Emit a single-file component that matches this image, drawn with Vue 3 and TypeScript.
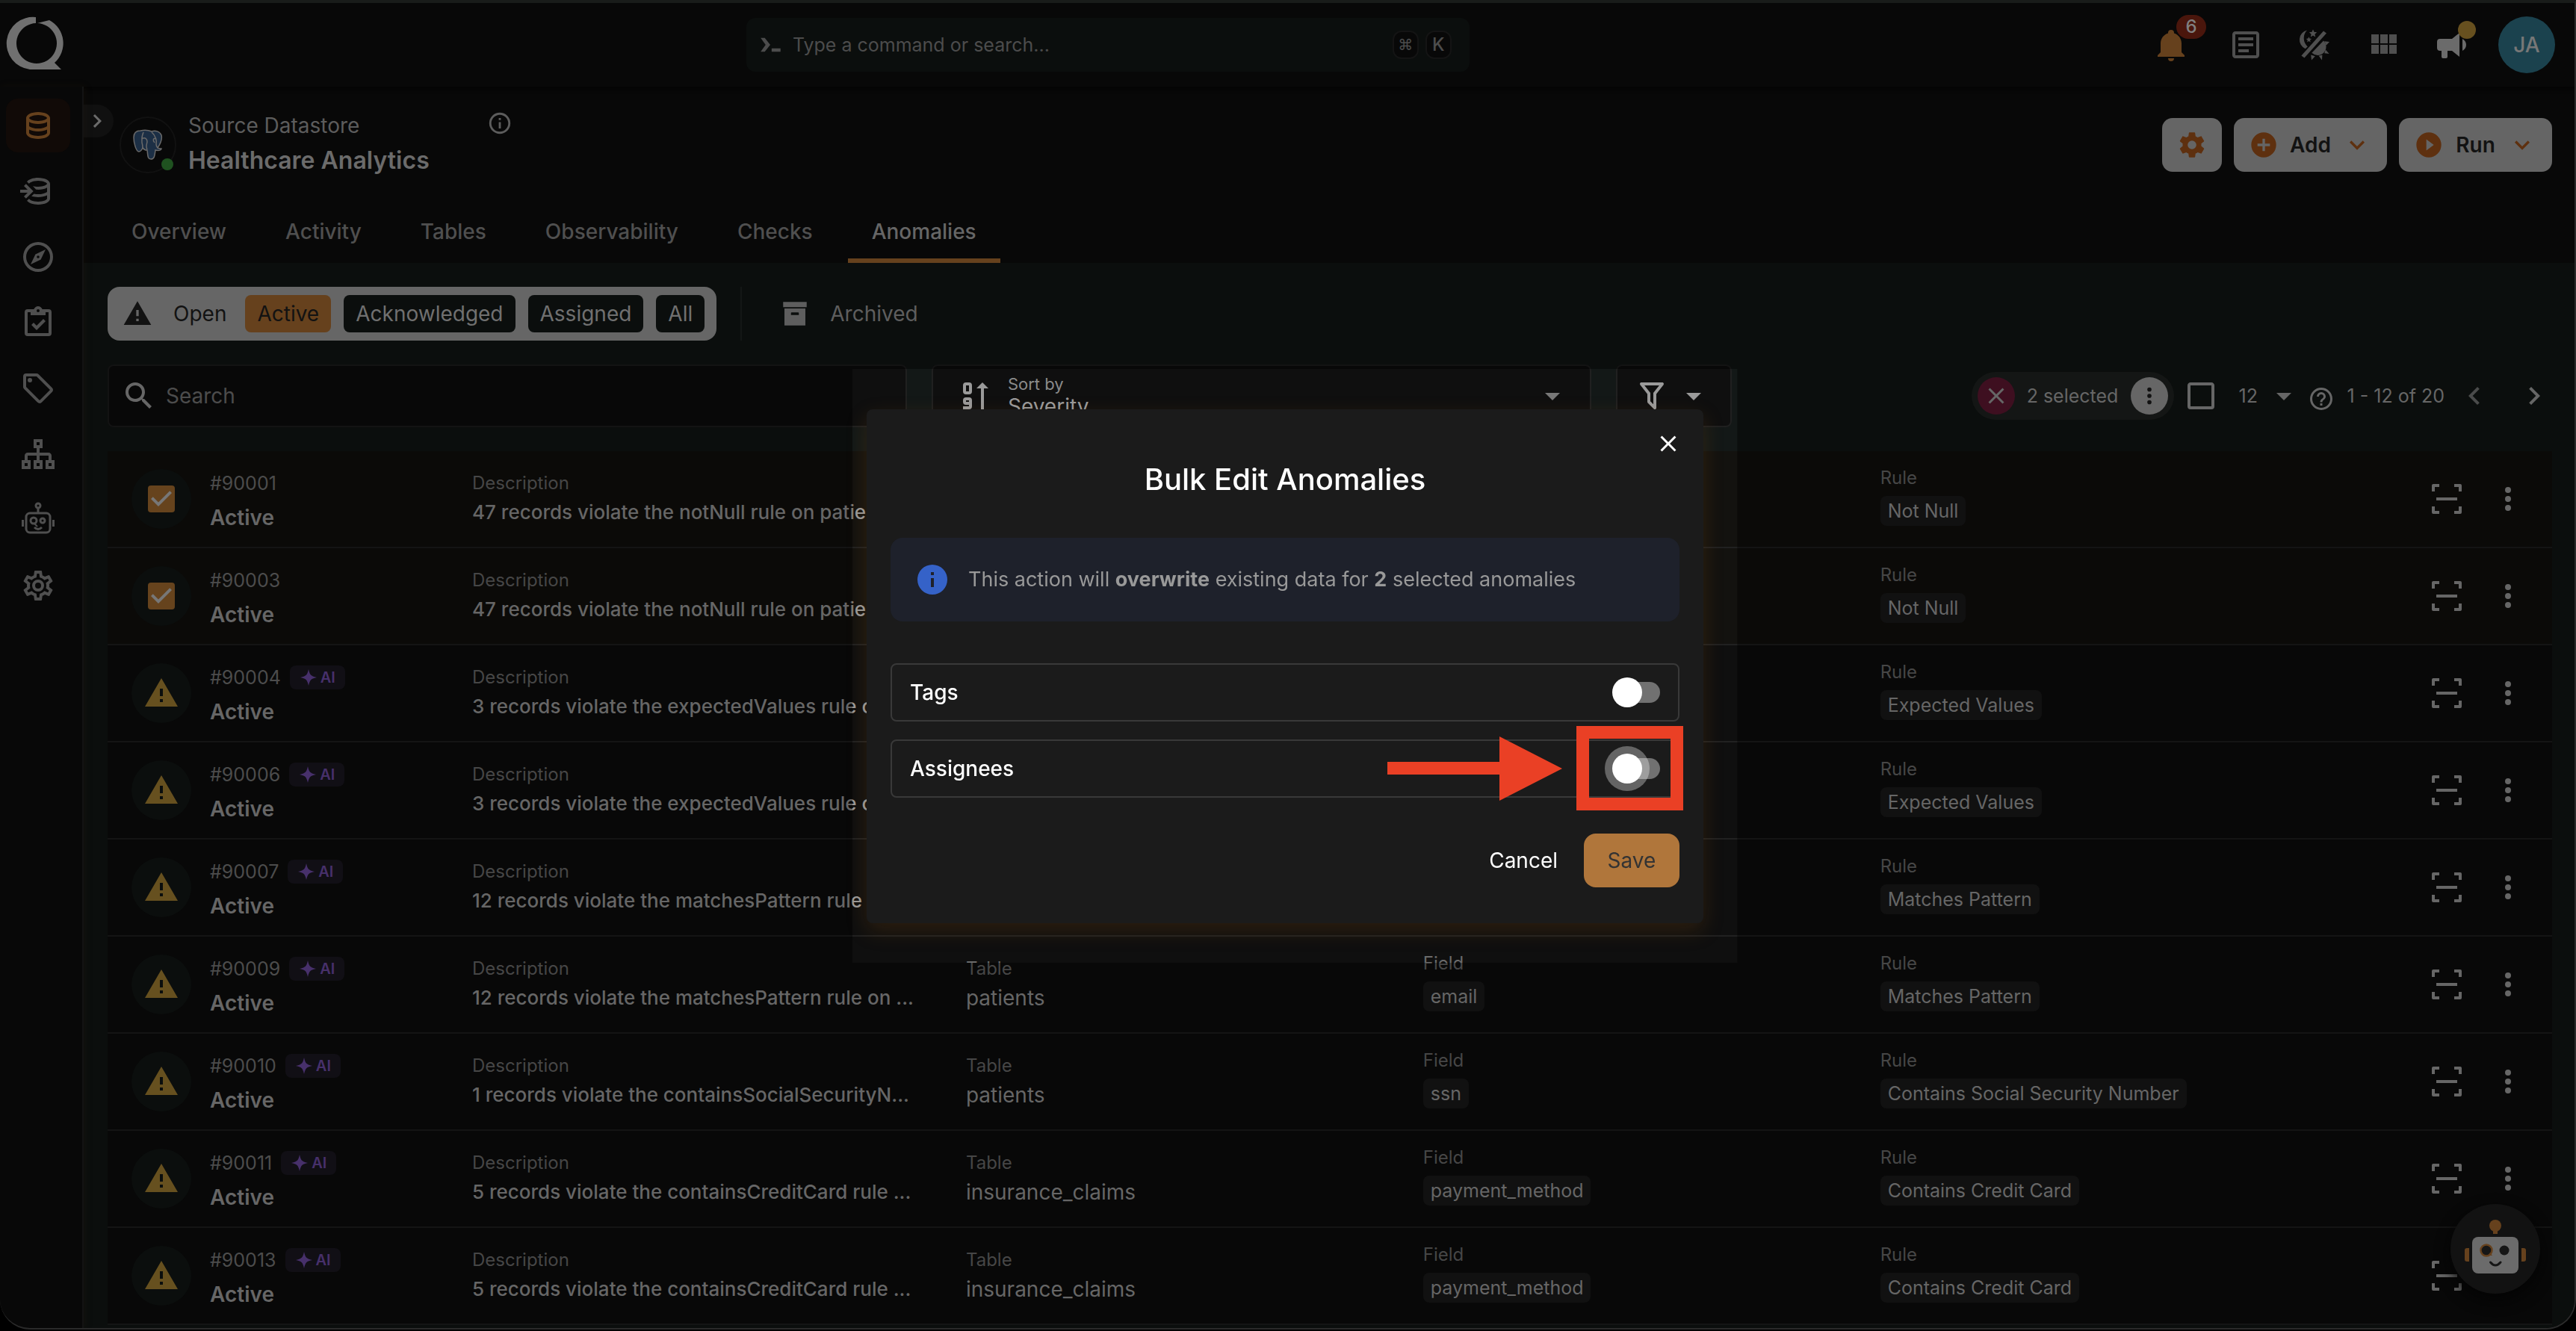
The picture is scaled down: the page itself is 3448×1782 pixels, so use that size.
<script setup lang="ts">
import { h, ref } from 'vue'

const paths: Record<string, string> = {
  database: 'M12 3C7.58 3 4 4.79 4 7V17C4 19.21 7.59 21 12 21S20 19.21 20 17V7C20 4.79 16.42 3 12 3M18 17C18 17.5 15.87 19 12 19S6 17.5 6 17V14.77C7.61 15.55 9.72 16 12 16S16.39 15.55 18 14.77V17M18 12.45C16.7 13.4 14.42 14 12 14C9.58 14 7.3 13.4 6 12.45V9.64C7.47 10.47 9.61 11 12 11C14.39 11 16.53 10.47 18 9.64V12.45M12 9C8.13 9 6 7.5 6 7S8.13 5 12 5C15.87 5 18 6.5 18 7S15.87 9 12 9Z',
  databaseImport: 'M8.84 12L3.92 16.92L2.5 15.5L5 13H0V11H5L2.5 8.5L3.92 7.08L8.84 12M12 3C8.59 3 5.69 4.07 4.54 5.57L6.2 7.22C6.07 7.1 6 7.02 6 7C6 6.5 8.13 5 12 5S18 6.5 18 7S15.87 9 12 9C10.6 9 9.4 8.8 8.46 8.5L10.6 10.92C11.05 10.97 11.52 11 12 11C14.39 11 16.53 10.47 18 9.64V12.45C16.7 13.4 14.42 14 12 14C11.04 14 10.1 13.9 9.24 13.73L7.55 15.42C8.9 15.8 10.4 16 12 16C14.28 16 16.39 15.55 18 14.77V17C18 17.5 15.87 19 12 19S6 17.5 6 17V16.96L4.54 18.43C5.69 19.93 8.59 21 12 21C16.41 21 20 19.21 20 17V7C20 4.79 16.42 3 12 3Z',
  compass: 'M7,17L10.2,10.2L17,7L13.8,13.8L7,17M12,11.1A0.9,0.9 0 0,0 11.1,12A0.9,0.9 0 0,0 12,12.9A0.9,0.9 0 0,0 12.9,12A0.9,0.9 0 0,0 12,11.1M12,2A10,10 0 0,1 22,12A10,10 0 0,1 12,22A10,10 0 0,1 2,12A10,10 0 0,1 12,2M12,4A8,8 0 0,0 4,12A8,8 0 0,0 12,20A8,8 0 0,0 20,12A8,8 0 0,0 12,4Z',
  clipboard: 'M19,3H14.82C14.4,1.84 13.3,1 12,1C10.7,1 9.6,1.84 9.18,3H5A2,2 0 0,0 3,5V19A2,2 0 0,0 5,21H19A2,2 0 0,0 21,19V5A2,2 0 0,0 19,3M12,3A1,1 0 0,1 13,4A1,1 0 0,1 12,5A1,1 0 0,1 11,4A1,1 0 0,1 12,3M7,7H17V5H19V19H5V5H7V7M7.5,13.5L9,12L11,14L15.5,9.5L17,11L11,17L7.5,13.5Z',
  tag: 'M21.41 11.58L12.41 2.58A2 2 0 0 0 11 2H4A2 2 0 0 0 2 4V11A2 2 0 0 0 2.59 12.42L11.59 21.42A2 2 0 0 0 13 22A2 2 0 0 0 14.41 21.41L21.41 14.41A2 2 0 0 0 22 13A2 2 0 0 0 21.41 11.58M13 20L4 11V4H11L20 13M6.5 5A1.5 1.5 0 1 1 5 6.5A1.5 1.5 0 0 1 6.5 5Z',
  sitemap: 'M9 2V8H11V11H5C3.89 11 3 11.89 3 13V16H1V22H7V16H5V13H11V16H9V22H15V16H13V13H19V16H17V22H23V16H21V13C21 11.89 20.11 11 19 11H13V8H15V2H9M11 4H13V6H11V4M3 18H5V20H3V18M11 18H13V20H11V18M19 18H21V20H19V18Z',
  cogOutline: 'M12,8A4,4 0 0,1 16,12A4,4 0 0,1 12,16A4,4 0 0,1 8,12A4,4 0 0,1 12,8M12,10A2,2 0 0,0 10,12A2,2 0 0,0 12,14A2,2 0 0,0 14,12A2,2 0 0,0 12,10M10,22C9.75,22 9.54,21.82 9.5,21.58L9.13,18.93C8.5,18.68 7.96,18.34 7.44,17.94L4.95,18.95C4.73,19.03 4.46,18.95 4.34,18.73L2.34,15.27C2.21,15.05 2.27,14.78 2.46,14.63L4.57,12.97L4.5,12L4.57,11L2.46,9.37C2.27,9.22 2.21,8.95 2.34,8.73L4.34,5.27C4.46,5.05 4.73,4.96 4.95,5.05L7.44,6.05C7.96,5.66 8.5,5.32 9.13,5.07L9.5,2.42C9.54,2.18 9.75,2 10,2H14C14.25,2 14.46,2.18 14.5,2.42L14.87,5.07C15.5,5.32 16.04,5.66 16.56,6.05L19.05,5.05C19.27,4.96 19.54,5.05 19.66,5.27L21.66,8.73C21.79,8.95 21.73,9.22 21.54,9.37L19.43,11L19.5,12L19.43,13L21.54,14.63C21.73,14.78 21.79,15.05 21.66,15.27L19.66,18.73C19.54,18.95 19.27,19.04 19.05,18.95L16.56,17.95C16.04,18.34 15.5,18.68 14.87,18.93L14.5,21.58C14.46,21.82 14.25,22 14,22H10M11.25,4L10.88,6.61C9.68,6.86 8.62,7.5 7.85,8.39L5.44,7.35L4.69,8.65L6.8,10.2C6.4,11.37 6.4,12.64 6.8,13.8L4.68,15.36L5.43,16.66L7.86,15.62C8.63,16.5 9.68,17.14 10.87,17.38L11.24,20H12.76L13.13,17.39C14.32,17.14 15.37,16.5 16.14,15.62L18.57,16.66L19.32,15.36L17.2,13.81C17.6,12.64 17.6,11.37 17.2,10.2L19.31,8.65L18.56,7.35L16.15,8.39C15.38,7.5 14.32,6.86 13.12,6.62L12.75,4H11.25Z',
  cog: 'M12,15.5A3.5,3.5 0 0,1 8.5,12A3.5,3.5 0 0,1 12,8.5A3.5,3.5 0 0,1 15.5,12A3.5,3.5 0 0,1 12,15.5M19.43,12.97C19.47,12.65 19.5,12.33 19.5,12C19.5,11.67 19.47,11.34 19.43,11L21.54,9.37C21.73,9.22 21.78,8.95 21.66,8.73L19.66,5.27C19.54,5.05 19.27,4.96 19.05,5.05L16.56,6.05C16.04,5.66 15.5,5.32 14.87,5.07L14.5,2.42C14.46,2.18 14.25,2 14,2H10C9.75,2 9.54,2.18 9.5,2.42L9.13,5.07C8.5,5.32 7.96,5.66 7.44,6.05L4.95,5.05C4.73,4.96 4.46,5.05 4.34,5.27L2.34,8.73C2.21,8.95 2.27,9.22 2.46,9.37L4.57,11C4.53,11.34 4.5,11.67 4.5,12C4.5,12.33 4.53,12.65 4.57,12.97L2.46,14.63C2.27,14.78 2.21,15.05 2.34,15.27L4.34,18.73C4.46,18.95 4.73,19.03 4.95,18.95L7.44,17.94C7.96,18.34 8.5,18.68 9.13,18.93L9.5,21.58C9.54,21.82 9.75,22 10,22H14C14.25,22 14.46,21.82 14.5,21.58L14.87,18.93C15.5,18.67 16.04,18.34 16.56,17.94L19.05,18.95C19.27,19.03 19.54,18.95 19.66,18.73L21.66,15.27C21.78,15.05 21.73,14.78 21.54,14.63L19.43,12.97Z',
  plusCircle: 'M17,13H13V17H11V13H7V11H11V7H13V11H17M12,2A10,10 0 0,0 2,12A10,10 0 0,0 12,22A10,10 0 0,0 22,12A10,10 0 0,0 12,2Z',
  playCircle: 'M10,16.5V7.5L16,12M12,2A10,10 0 0,0 2,12A10,10 0 0,0 12,22A10,10 0 0,0 22,12A10,10 0 0,0 12,2Z',
  chevronDown: 'M7.41,8.58L12,13.17L16.59,8.58L18,10L12,16L6,10L7.41,8.58Z',
  chevronRight: 'M8.59,16.58L13.17,12L8.59,7.41L10,6L16,12L10,18L8.59,16.58Z',
  chevronLeft: 'M15.41,16.58L10.83,12L15.41,7.41L14,6L8,12L14,18L15.41,16.58Z',
  bell: 'M21,19V20H3V19L5,17V11C5,7.9 7.03,5.17 10,4.29C10,4.19 10,4.1 10,4A2,2 0 0,1 12,2A2,2 0 0,1 14,4C14,4.1 14,4.19 14,4.29C16.97,5.17 19,7.9 19,11V17L21,19M14,21A2,2 0 0,1 12,23A2,2 0 0,1 10,21',
  article: 'M19 5V19H5V5H19M19 3H5C3.9 3 3 3.9 3 5V19C3 20.1 3.9 21 5 21H19C20.1 21 21 20.1 21 19V5C21 3.9 20.1 3 19 3M14 17H7V15H14V17M17 13H7V11H17V13M17 9H7V7H17V9Z',
  grid: 'M16,5V11H21V5M10,11H15V5H10M16,18H21V12H16M10,18H15V12H10M4,18H9V12H4M4,11H9V5H4V11Z',
  bullhorn: 'M12,8H4A2,2 0 0,0 2,10V14A2,2 0 0,0 4,16H5V20A1,1 0 0,0 6,21H8A1,1 0 0,0 9,20V16H12L17,20V4L12,8M21.5,12C21.5,13.71 20.54,15.26 19,16V8C20.53,8.75 21.5,10.3 21.5,12Z',
  alert: 'M13 14H11V9H13M13 18H11V16H13M1 21H23L12 2L1 21Z',
  magnify: 'M9.5,3A6.5,6.5 0 0,1 16,9.5C16,11.11 15.41,12.59 14.44,13.73L14.71,14H15.5L20.5,19L19,20.5L14,15.5V14.71L13.73,14.44C12.59,15.41 11.11,16 9.5,16A6.5,6.5 0 0,1 3,9.5A6.5,6.5 0 0,1 9.5,3M9.5,5C7,5 5,7 5,9.5C5,12 7,14 9.5,14C12,14 14,12 14,9.5C14,7 12,5 9.5,5Z',
  infoOutline: 'M11,9H13V7H11M12,20C7.59,20 4,16.41 4,12C4,7.59 7.59,4 12,4C16.41,4 20,7.59 20,12C20,16.41 16.41,20 12,20M12,2A10,10 0 0,0 2,12A10,10 0 0,0 12,22A10,10 0 0,0 22,12A10,10 0 0,0 12,2M11,17H13V11H11V17Z',
  info: 'M13,9H11V7H13M13,17H11V11H13M12,2A10,10 0 0,0 2,12A10,10 0 0,0 12,22A10,10 0 0,0 22,12A10,10 0 0,0 12,2Z',
  archive: 'M3,3H21V7H3V3M4,8H20V21H4V8M9.5,11A0.5,0.5 0 0,0 9,11.5V13H15V11.5A0.5,0.5 0 0,0 14.5,11H9.5Z',
  filter: 'M15,19.88C15.04,20.18 14.94,20.5 14.71,20.71C14.32,21.1 13.69,21.1 13.3,20.71L9.29,16.7C9.06,16.47 8.96,16.16 9,15.87V10.75L4.21,4.62C3.87,4.19 3.95,3.56 4.38,3.22C4.57,3.08 4.78,3 5,3H19C19.22,3 19.43,3.08 19.62,3.22C20.05,3.56 20.13,4.19 19.79,4.62L15,10.75V19.88M7.04,5L11,10.06V15.58L13,17.58V10.05L16.96,5H7.04Z',
  menuDown: 'M7,10L12,15L17,10H7Z',
  close: 'M19,6.41L17.59,5L12,10.59L6.41,5L5,6.41L10.59,12L5,17.59L6.41,19L12,13.41L17.59,19L19,17.59L13.41,12L19,6.41Z',
  dots: 'M12,16A2,2 0 0,1 14,18A2,2 0 0,1 12,20A2,2 0 0,1 10,18A2,2 0 0,1 12,16M12,10A2,2 0 0,1 14,12A2,2 0 0,1 12,14A2,2 0 0,1 10,12A2,2 0 0,1 12,10M12,4A2,2 0 0,1 14,6A2,2 0 0,1 12,8A2,2 0 0,1 10,6A2,2 0 0,1 12,4Z',
  boxBlank: 'M19,3H5C3.89,3 3,3.89 3,5V19A2,2 0 0,0 5,21H19A2,2 0 0,0 21,19V5C21,3.89 20.1,3 19,3M19,5V19H5V5H19Z',
  help: 'M11,18H13V16H11V18M12,2A10,10 0 0,0 2,12A10,10 0 0,0 12,22A10,10 0 0,0 22,12A10,10 0 0,0 12,2M12,20C7.59,20 4,16.41 4,12C4,7.59 7.59,4 12,4C16.41,4 20,7.59 20,12C20,16.41 16.41,20 12,20M12,6A4,4 0 0,0 8,10H10A2,2 0 0,1 12,8A2,2 0 0,1 14,10C14,12 11,11.75 11,15H13C13,12.75 16,12.5 16,10A4,4 0 0,0 12,6Z',
  scan: 'M2 7V3A1 1 0 0 1 3 2H7V4H4V7ZM17 2H21A1 1 0 0 1 22 3V7H20V4H17ZM22 17V21A1 1 0 0 1 21 22H17V20H20V17ZM7 22H3A1 1 0 0 1 2 21V17H4V20H7ZM5 11H19V13H5Z',
  prompt: 'M5 7H8L12 12L8 17H5L8.6 12ZM13 14.6H19.5V17H13Z',
  sparkle: 'M12 1C13 5.500 14 7.600 15.200 8.800C16.400 10 18.500 11 23 12C18.500 13 16.400 14 15.200 15.200C14 16.400 13 18.500 12 23C11 18.500 10 16.400 8.800 15.200C7.600 14 5.500 13 1 12C5.500 11 7.600 10 8.800 8.800C10 7.600 11 5.500 12 1Z',
  sort: 'M5 3H7A2 2 0 0 1 9 5V9A2 2 0 0 1 7 11H5A2 2 0 0 1 3 9V5A2 2 0 0 1 5 3M5 5V9H7V5ZM5 13H7A2 2 0 0 1 9 15V19A2 2 0 0 1 7 21H3V19H7V18H5A2 2 0 0 1 3 16V15A2 2 0 0 1 5 13M5 15V16H7V15ZM16 3L20 7H17V21H15V7H12Z',
}

const Icon = (props: { name: string; size?: number }) =>
  h(
    'svg',
    { class: 'icon', viewBox: '0 0 24 24', width: props.size ?? 48, height: props.size ?? 48, 'aria-hidden': 'true' },
    [h('path', { d: paths[props.name], fill: 'currentColor', 'fill-rule': 'evenodd' })],
  )
Icon.props = ['name', 'size']

interface Anomaly {
  id: string
  ai: boolean
  selected: boolean
  description: string
  table?: string
  field?: string
  rule: string
}

const anomalies = ref<Anomaly[]>([
  { id: '#90001', ai: false, selected: true, description: '47 records violate the notNull rule on patie', rule: 'Not Null' },
  { id: '#90003', ai: false, selected: true, description: '47 records violate the notNull rule on patie', rule: 'Not Null' },
  { id: '#90004', ai: true, selected: false, description: '3 records violate the expectedValues rule o', rule: 'Expected Values' },
  { id: '#90006', ai: true, selected: false, description: '3 records violate the expectedValues rule o', rule: 'Expected Values' },
  { id: '#90007', ai: true, selected: false, description: '12 records violate the matchesPattern rule', rule: 'Matches Pattern' },
  { id: '#90009', ai: true, selected: false, description: '12 records violate the matchesPattern rule on ...', table: 'patients', field: 'email', rule: 'Matches Pattern' },
  { id: '#90010', ai: true, selected: false, description: '1 records violate the containsSocialSecurityN...', table: 'patients', field: 'ssn', rule: 'Contains Social Security Number' },
  { id: '#90011', ai: true, selected: false, description: '5 records violate the containsCreditCard rule ...', table: 'insurance_claims', field: 'payment_method', rule: 'Contains Credit Card' },
  { id: '#90013', ai: true, selected: false, description: '5 records violate the containsCreditCard rule ...', table: 'insurance_claims', field: 'payment_method', rule: 'Contains Credit Card' },
])

const tabs = ['Overview', 'Activity', 'Tables', 'Observability', 'Checks', 'Anomalies']
const activeTab = ref('Anomalies')
const statuses = ['Active', 'Acknowledged', 'Assigned', 'All']
const status = ref('Active')
const editTags = ref(false)
const editAssignees = ref(false)
</script>

<template>
  <div class="window">
    <header class="topbar">
      <a href="#" class="logo" aria-label="Home">
        <svg viewBox="0 0 96 112" width="96" height="112"><path fill="currentColor" d="M48 19A35 35 0 0 0 40 89H82L73 80A35 35 0 0 0 66 23L50 27A27 27 0 1 1 48 27Z" /></svg>
      </a>
      <label class="command">
        <Icon name="prompt" :size="44" />
        <input type="text" aria-label="Command" placeholder="Type a command or search..." />
        <kbd class="sym">⌘</kbd><kbd>K</kbd>
      </label>
      <div class="top-actions">
        <button class="ghost bell" aria-label="Notifications"><Icon name="bell" /><span class="count">6</span></button>
        <button class="ghost" aria-label="News"><Icon name="article" /></button>
        <button class="ghost" aria-label="Theme">
          <svg class="icon" viewBox="0 0 24 24" width="48" height="48" fill="currentColor">
            <path d="M3.2 19.2 18 2.8 20 4.2 5.2 20.8Z" />
            <path d="M7 2.2A6.6 6.6 0 0 0 5.8 14.6L7.4 13.2A7.6 7.6 0 0 1 7 2.2Z" />
            <path d="M11 1.6 11.7 3.4 13.6 3.6 12.2 4.9 12.6 6.8 11 5.8 9.4 6.8 9.8 4.9 8.4 3.6 10.3 3.4ZM8.2 6.6 8.7 7.8 10 8 9 8.9 9.3 10.2 8.2 9.5 7.1 10.2 7.4 8.9 6.4 8 7.7 7.8Z" />
            <path d="M18 9.2A5.6 5.6 0 0 1 10.2 17.4Z" />
            <path d="M18.6 9.6 22 10 19.8 12.4ZM19.4 15.2 21.8 18 18.6 17.6ZM14.8 19.4 17.2 18.8 17 22.2ZM9.6 18.8 12.4 19.6 10 22.2Z" />
          </svg>
        </button>
        <button class="ghost" aria-label="Apps"><Icon name="grid" /></button>
        <button class="ghost horn" aria-label="Announcements"><Icon name="bullhorn" /><span class="dot"></span></button>
        <button class="user">JA</button>
      </div>
    </header>

    <div class="body">
      <nav class="rail" aria-label="Main">
        <a href="#" class="rail-item current" aria-label="Datastores"><Icon name="database" /></a>
        <a href="#" class="rail-item" aria-label="Import"><Icon name="databaseImport" /></a>
        <a href="#" class="rail-item" aria-label="Explore"><Icon name="compass" /></a>
        <a href="#" class="rail-item" aria-label="Checks"><Icon name="clipboard" /></a>
        <a href="#" class="rail-item" aria-label="Tags"><Icon name="tag" /></a>
        <a href="#" class="rail-item" aria-label="Flows"><Icon name="sitemap" /></a>
        <a href="#" class="rail-item" aria-label="Assistant">
          <svg class="icon" viewBox="0 0 48 48" width="48" height="48" fill="none" stroke="currentColor" stroke-width="3">
            <circle cx="24" cy="5" r="3" /><path d="M24 8V15" />
            <rect x="8" y="15" width="32" height="26" rx="5" />
            <circle cx="18" cy="25" r="4" /><circle cx="30" cy="25" r="3" />
            <path d="M19 29 23 33" stroke-width="2" /><path d="M19 34Q24 39 29 34" /><path d="M3.5 24V33M44.5 24V33" />
          </svg>
        </a>
        <a href="#" class="rail-item" aria-label="Settings"><Icon name="cogOutline" /></a>
      </nav>

      <main>
        <section class="store">
          <button class="expand" aria-label="Expand menu"><Icon name="chevronRight" :size="36" /></button>
          <div class="store-row">
            <div class="store-logo">
              <svg viewBox="0 0 40 42" width="40" height="42">
                <path d="M10 2C3 2 1 6 1 11C1 18 4 30 8 30C10 30 12 27 13 25C15 28 18 28 19 28C20 34 19 40 24 40C29 40 29 35 30 28C35 29 38 28 38 26C36 26 34 26 33 25C37 19 39 12 38 8C36 3 30 1 25 3C20 1 15 1 10 2Z" fill="#1c2f45" stroke="#6a6a6a" stroke-width="1.5" />
                <path d="M14 4C11 10 12 14 12 18C13 21 13 23 13 25M12 13C16 10 19 13 19 17C18 21 17 24 19 27M25 4C31 9 32 16 31 20C31 23 33 25 33 25M31 13C27 11 26 15 29 18" fill="none" stroke="#6a6a6a" stroke-width="1.5" />
              </svg>
              <span class="online"></span>
            </div>
            <div class="store-name">
              <p>Source Datastore</p>
              <h1>Healthcare Analytics</h1>
            </div>
            <button class="ghost store-info" aria-label="Details"><Icon name="infoOutline" :size="34" /></button>
            <div class="store-actions">
              <button class="solid" aria-label="Settings"><Icon name="cog" :size="40" /></button>
              <button class="solid wide"><Icon name="plusCircle" :size="40" /><span>Add</span><Icon name="chevronDown" :size="40" /></button>
              <button class="solid wide"><Icon name="playCircle" :size="40" /><span>Run</span><Icon name="chevronDown" :size="40" /></button>
            </div>
          </div>
          <nav class="tabs" aria-label="Datastore">
            <a v-for="t in tabs" :key="t" href="#" :class="{ on: t === activeTab }" @click.prevent="activeTab = t">{{ t }}</a>
          </nav>
        </section>

        <section class="content">
          <div class="status-row">
            <div class="status-pill">
              <Icon name="alert" :size="40" />
              <span class="open">Open</span>
              <button v-for="s in statuses" :key="s" class="chip" :class="{ on: s === status }" @click="status = s">{{ s }}</button>
            </div>
            <span class="rule"></span>
            <button class="ghost archived"><Icon name="archive" :size="42" />Archived</button>
          </div>

          <div class="controls">
            <label class="field search"><Icon name="magnify" /><input type="text" aria-label="Search" placeholder="Search" /></label>
            <div class="field sort">
              <Icon name="sort" />
              <div class="sort-text">
                <label for="sort">Sort by</label>
                <select id="sort"><option>Severity</option></select>
              </div>
              <Icon name="menuDown" />
            </div>
            <button class="field filter" aria-label="Filter"><Icon name="filter" /><Icon name="menuDown" /></button>
            <div class="paging">
              <div class="bulk">
                <button class="round clear" aria-label="Clear selection"><Icon name="close" :size="36" /></button>
                <span>2 selected</span>
                <button class="round more" aria-label="Bulk actions"><Icon name="dots" :size="34" /></button>
              </div>
              <label class="tick"><input type="checkbox" aria-label="Select all" /><Icon name="boxBlank" /></label>
              <span class="per-page"><select aria-label="Rows per page"><option>12</option></select><Icon name="menuDown" /></span>
              <span class="hint"><Icon name="help" :size="36" /></span>
              <span class="range">1 - 12 of 20</span>
              <button class="ghost prev" aria-label="Previous page"><Icon name="chevronLeft" /></button>
              <button class="ghost next" aria-label="Next page"><Icon name="chevronRight" /></button>
            </div>
          </div>

          <table>
            <colgroup><col class="c-id" /><col class="c-desc" /><col class="c-mid" /><col class="c-mid" /><col /><col class="c-act" /></colgroup>
            <tbody>
              <tr v-for="a in anomalies" :key="a.id" :class="{ picked: a.selected }">
                <td>
                  <div class="who">
                    <label class="badge tick">
                      <input v-model="a.selected" type="checkbox" :aria-label="'Select ' + a.id" />
                      <svg v-if="a.selected" class="icon" viewBox="0 0 24 24" width="48" height="48">
                        <rect x="3" y="3" width="18" height="18" rx="2" fill="#66431d" />
                        <path d="M10 17 5 12 6.4 10.6 10 14.2 17.6 6.6 19 8Z" fill="#777" />
                      </svg>
                      <Icon v-else name="alert" />
                    </label>
                    <div class="ident">
                      <p class="id">{{ a.id }}<span v-if="a.ai" class="ai"><Icon name="sparkle" :size="24" />AI</span></p>
                      <p class="state">Active</p>
                    </div>
                  </div>
                </td>
                <td class="text"><p class="label">Description</p><p class="value">{{ a.description }}</p></td>
                <td class="text"><template v-if="a.table"><p class="label">Table</p><p class="value plain">{{ a.table }}</p></template></td>
                <td class="pill"><template v-if="a.field"><p class="label">Field</p><span class="code">{{ a.field }}</span></template></td>
                <td class="pill"><p class="label">Rule</p><span class="code">{{ a.rule }}</span></td>
                <td>
                  <div class="row-actions">
                    <button class="ghost" aria-label="Preview"><Icon name="scan" /></button>
                    <button class="ghost" aria-label="More"><Icon name="dots" /></button>
                  </div>
                </td>
              </tr>
            </tbody>
          </table>
        </section>
      </main>
    </div>

    <button class="bot" aria-label="Assistant">
      <svg viewBox="0 0 120 120" width="120" height="120">
        <circle cx="60" cy="29" r="8" fill="#66411d" /><rect x="57" y="34" width="6" height="6" fill="#66411d" />
        <path d="M25 59H22A3 3 0 0 0 19 62V74A3 3 0 0 0 22 77H25ZM95 59H98A3 3 0 0 1 101 62V74A3 3 0 0 1 98 77H95Z" fill="#66411d" />
        <rect x="29" y="44" width="62" height="49" rx="8" fill="#6b6b6b" />
        <circle cx="48" cy="62" r="7.5" fill="#161616" stroke="#66411d" stroke-width="2.5" /><path d="M50 69H56L53 65Z" fill="#66411d" />
        <circle cx="72" cy="62" r="6.5" fill="#161616" />
        <path d="M53.500 78Q60 86 67 78" fill="none" stroke="#161616" stroke-width="3" stroke-linecap="round" />
      </svg>
    </button>

    <div class="overlay">
      <div class="dialog-area">
        <div class="spotlight"></div>
        <div class="dialog" role="dialog" aria-labelledby="dialog-title">
          <button class="close" aria-label="Close"><Icon name="close" :size="36" /></button>
          <h2 id="dialog-title">Bulk Edit Anomalies</h2>
          <div class="notice">
            <Icon name="info" />
            <p>This action will <strong>overwrite</strong> existing data for <strong>2</strong> selected anomalies</p>
          </div>
          <label class="option"><span>Tags</span><span class="switch"><input v-model="editTags" type="checkbox" /></span></label>
          <label class="option"><span>Assignees</span><span class="switch focused"><input v-model="editAssignees" type="checkbox" /></span></label>
          <div class="buttons">
            <button class="cancel">Cancel</button>
            <button class="save">Save</button>
          </div>
          <svg class="arrow" viewBox="0 0 234 86" width="234" height="86"><path d="M0 34H150V0L234 43L150 86V51H0Z" fill="#ea4025" /></svg>
          <div class="frame"></div>
        </div>
      </div>
    </div>
  </div>
</template>

<style>
body {
  margin: 0;
  background: #000;
}
</style>

<style scoped>
* {
  box-sizing: border-box;
}
.window {
  position: relative;
  margin-bottom: 2px;
  min-height: calc(100vh - 2px);
  display: flex;
  flex-direction: column;
  overflow: hidden;
  background: #080808;
  border-top: 4px solid #191c1a;
  border-right: 2px solid #2a2a2a;
  border-bottom: 2px solid #2a2a2a;
  border-radius: 0 0 40px 40px;
  color: #666;
  font-family: Inter, 'Noto Sans', sans-serif;
  font-size: 28px;
  line-height: 40px;
}
p, h1, h2 {
  margin: 0;
}
button, input, select {
  font: inherit;
  color: inherit;
  background: none;
  border: 0;
  padding: 0;
  margin: 0;
}
input, select {
  outline: none;
  appearance: none;
  min-width: 0;
}
.icon {
  display: block;
  flex: none;
}
.ghost {
  position: relative;
  display: flex;
  align-items: center;
}
.tick {
  position: relative;
  display: block;
}
.tick input {
  position: absolute;
  inset: 0;
  opacity: 0;
}

/* top bar */
.topbar {
  height: 112px;
  display: flex;
  align-items: center;
  padding-right: 26px;
}
.logo {
  display: block;
  height: 112px;
  color: #707070;
  flex: none;
}
.command {
  margin-left: 26.4%;
  width: 28.3%;
  height: 72px;
  display: flex;
  align-items: center;
  padding: 0 24px 0 10px;
  background: #0b0e0d;
  border-radius: 12px;
  color: #4c4c4c;
  font-size: 25px;
}
.command input {
  flex: 1;
  margin-left: 8px;
}
.command input::placeholder,
.search input::placeholder {
  color: #4c4c4c;
  opacity: 1;
}
kbd {
  width: 35px;
  height: 38px;
  margin-left: 9px;
  display: flex;
  align-items: center;
  justify-content: center;
  background: #080808;
  border: 2px solid #141414;
  border-radius: 12px;
  font-family: inherit;
  font-size: 24px;
  font-weight: 500;
}
kbd.sym {
  font-family: 'DejaVu Sans', sans-serif;
  font-size: 20px;
}
.top-actions {
  margin-left: auto;
  display: flex;
  align-items: center;
  gap: 44px;
  color: #4f4f4f;
}
.bell {
  color: #66411d;
  margin-right: 8px;
}
.count {
  position: absolute;
  left: 31px;
  top: -16px;
  width: 40px;
  height: 32px;
  border-radius: 16px;
  background: #4a160c;
  color: #808080;
  font-size: 24px;
  font-weight: 500;
  line-height: 32px;
  text-align: center;
}
.horn {
  color: #6b6b6b;
}
.dot {
  position: absolute;
  left: 32px;
  top: -8px;
  width: 24px;
  height: 24px;
  border-radius: 50%;
  background: #67501f;
}
.user {
  margin-left: -6px;
  width: 76px;
  height: 76px;
  border-radius: 50%;
  background: #1b424e;
  color: #777;
  font-weight: 500;
}

/* left rail */
.body {
  flex: 1;
  display: flex;
}
.rail {
  width: 112px;
  flex: none;
  position: relative;
  z-index: 1;
  border-right: 2px solid #131313;
  padding: 16px 0 0 8px;
  display: flex;
  flex-direction: column;
  gap: 16px;
  box-shadow: 2px 0 10px rgba(70, 45, 20, 0.15);
}
.rail-item {
  width: 86px;
  height: 72px;
  border-radius: 16px;
  display: flex;
  align-items: center;
  justify-content: center;
  color: #4f4f4f;
}
.rail-item.current {
  background: #110a07;
  color: #66411d;
}
main {
  flex: 1;
  min-width: 0;
  display: flex;
  flex-direction: column;
}

/* datastore header */
.store {
  position: relative;
  padding: 40px 30px 0 48px;
  height: 236px;
  display: flex;
  flex-direction: column;
  justify-content: space-between;
  box-shadow: inset 0 6px 6px -4px #030303;
}
.expand {
  position: absolute;
  left: 0;
  top: 24px;
  width: 40px;
  height: 44px;
  background: #101010;
  border-radius: 0 22px 22px 0;
  color: #6b6b6b;
}
.store-row {
  display: flex;
  align-items: flex-start;
}
.store-logo {
  position: relative;
  width: 76px;
  height: 76px;
  border: 2px solid #111;
  border-radius: 50%;
  display: flex;
  align-items: center;
  justify-content: center;
}
.online {
  position: absolute;
  right: 2px;
  bottom: 2px;
  width: 16px;
  height: 16px;
  border-radius: 50%;
  background: #1f5220;
}
.store-name {
  margin-left: 16px;
  margin-top: -8px;
  width: 400px;
}
.store-name p {
  line-height: 40px;
  color: #5c5c5c;
}
.store-name h1 {
  font-size: 32px;
  line-height: 54px;
  font-weight: 600;
  color: #6b6b6b;
}
.store-info {
  margin-top: -8px;
  color: #5c5c5c;
}
.store-actions {
  margin-left: auto;
  margin-top: 2px;
  display: flex;
  gap: 16px;
  color: #5e300f;
}
.solid {
  min-width: 80px;
  height: 72px;
  display: flex;
  align-items: center;
  justify-content: center;
  background: #656565;
  border-radius: 14px;
}
.solid.wide {
  min-width: 205px;
  justify-content: space-between;
  padding: 0 20px;
}
.solid span {
  color: #121212;
  font-weight: 600;
}
.tabs {
  display: flex;
  gap: 15px;
  margin-left: -16px;
}
.tabs a {
  height: 78px;
  padding: 16px 32px 0;
  border-bottom: 6px solid transparent;
  color: #4f4f4f;
  font-weight: 500;
  text-decoration: none;
}
.tabs a.on {
  color: #666;
  border-bottom-color: #66411d;
}

/* list */
.content {
  flex: 1;
  background: #0b0e0d;
  padding: 32px 30px 4px 32px;
  display: flex;
  flex-direction: column;
  gap: 32px;
}
.status-row {
  display: flex;
  align-items: center;
}
.status-pill {
  height: 72px;
  display: flex;
  align-items: center;
  gap: 17px;
  padding: 0 16px 0 20px;
  background: #666;
  border-radius: 16px;
  color: #121212;
}
.open {
  margin: 0 8px 0 11px;
}
.chip {
  height: 50px;
  padding: 0 16px;
  border-radius: 8px;
  background: #0b0e0d;
  color: #707070;
}
.chip.on {
  background: #66411d;
  color: #121212;
}
.rule {
  width: 2px;
  height: 72px;
  margin: 0 50px 0 32px;
  background: #141716;
}
.archived {
  gap: 26px;
  color: #5e5e5e;
}
.controls {
  display: flex;
  align-items: center;
  gap: 33px;
}
.field {
  height: 84px;
  display: flex;
  align-items: center;
  border: 2px solid #131313;
  border-radius: 8px;
  background: #080808;
}
.search {
  width: 32.7%;
  padding-left: 16px;
}
.search input {
  flex: 1;
  margin-left: 12px;
}
.sort {
  width: 27%;
  padding: 0 34px;
  gap: 18px;
}
.sort-text {
  flex: 1;
  display: flex;
  flex-direction: column;
}
.sort-text label {
  font-size: 22px;
  line-height: 28px;
  color: #5c5c5c;
}
.sort-text select {
  line-height: 32px;
  height: 32px;
}
.sort > .icon:last-child {
  color: #4f4f4f;
  margin-right: -8px;
}
.filter {
  width: 155px;
  padding-left: 22px;
  gap: 8px;
}
.paging {
  margin-left: auto;
  display: flex;
  align-items: center;
  font-size: 25px;
}
.bulk {
  width: 271px;
  height: 64px;
  padding: 0 8px;
  display: flex;
  align-items: center;
  justify-content: space-between;
  background: #141615;
  border-radius: 32px;
}
.round {
  width: 50px;
  height: 50px;
  border-radius: 50%;
  display: flex;
  align-items: center;
  justify-content: center;
}
.clear {
  background: #3e0f20;
}
.more {
  background: #666;
  color: #121212;
}
.paging .tick {
  margin: 0 27px 0 12px;
}
.per-page {
  display: flex;
  align-items: center;
  gap: 10px;
}
.hint {
  margin: 8px 17px 0 8px;
}
.prev {
  margin: 0 32px 0 16px;
  opacity: 0.7;
}

table {
  width: 100%;
  table-layout: fixed;
  border-collapse: separate;
  border-spacing: 0;
  background: #080808;
}
.c-id {
  width: 488px;
}
.c-desc {
  width: 20.2%;
}
.c-mid {
  width: 18.7%;
}
.c-act {
  width: 165px;
}
tr.picked {
  background: #0b0a08;
}
td {
  height: 130px;
  padding: 0;
  border-bottom: 2px solid #141414;
  vertical-align: top;
  white-space: nowrap;
}
.who {
  display: flex;
  gap: 25px;
  padding: 20px 0 0 32px;
}
.badge {
  margin-top: 4px;
  width: 80px;
  height: 80px;
  border-radius: 50%;
  display: flex;
  align-items: center;
  justify-content: center;
  background: #0b0e0d;
  color: #66501f;
}
.ident p {
  display: flex;
  align-items: center;
  line-height: 46px;
}
.id {
  font-size: 25px;
  color: #4c4c4c;
}
.state {
  font-weight: 600;
}
.ai {
  margin-left: 12px;
  height: 32px;
  padding: 0 13px;
  display: inline-flex;
  align-items: center;
  gap: 4px;
  border-radius: 8px;
  background: #110f15;
  color: #47306b;
  font-size: 20px;
  font-weight: 600;
}
.text {
  padding-top: 23px;
}
.pill {
  padding-top: 16px;
}
.label {
  font-size: 24px;
  color: #464646;
}
.value {
  font-size: 26px;
  line-height: 38px;
  font-weight: 500;
}
.plain {
  font-size: 28px;
  font-weight: 400;
}
.code {
  display: inline-block;
  margin-top: 4px;
  padding: 0 10px;
  border-radius: 8px;
  background: #111;
  font-size: 25px;
}
.row-actions {
  display: flex;
  gap: 34px;
  padding-top: 40px;
}

/* assistant */
.bot {
  position: absolute;
  right: 46px;
  bottom: 46px;
  width: 120px;
  height: 120px;
  border-radius: 50%;
  background: #121212;
  box-shadow: 0 8px 20px #040404;
}

/* dialog */
.overlay {
  position: fixed;
  inset: 0;
  z-index: 2;
  display: flex;
  align-items: center;
  justify-content: center;
  padding: 2px 8px 0 0;
}
.dialog-area {
  position: relative;
  width: 1120px;
}
.spotlight {
  position: absolute;
  inset: -54px -46px -53px -19px;
  background: rgba(255, 255, 255, 0.016);
  backdrop-filter: brightness(1.5);
}
.dialog {
  position: relative;
  padding: 70px 32px 48px;
  background: #1b1b1b;
  border-radius: 8px;
  box-shadow: 0 10px 28px rgba(150, 85, 20, 0.22);
}
.close {
  position: absolute;
  right: 29px;
  top: 28px;
  color: #fff;
}
h2 {
  margin-bottom: 54px;
  font-size: 40px;
  line-height: 48px;
  font-weight: 500;
  text-align: center;
  color: #fff;
}
.notice {
  height: 112px;
  display: flex;
  align-items: center;
  gap: 24px;
  padding-left: 32px;
  margin-bottom: 56px;
  background: #1e212b;
  border-radius: 16px;
  color: #3562c8;
}
.notice p {
  color: #999;
  font-size: 27px;
}
.notice strong {
  font-weight: 700;
}
.option {
  height: 78px;
  display: flex;
  align-items: center;
  justify-content: space-between;
  padding: 0 24px;
  border: 2px solid #393939;
  border-radius: 8px;
  color: #fff;
  font-weight: 500;
}
.option + .option {
  margin-top: 24px;
}
.switch {
  position: relative;
  width: 64px;
  height: 40px;
}
.switch::before {
  content: '';
  position: absolute;
  inset: 6px 0 6px 8px;
  border-radius: 14px;
  background: #717171;
}
.switch.focused::after {
  content: '';
  position: absolute;
  left: -10px;
  top: -10px;
  width: 60px;
  height: 60px;
  border-radius: 50%;
  background: rgba(255, 255, 255, 0.32);
}
.switch input {
  position: absolute;
  z-index: 1;
  width: 40px;
  height: 40px;
  border-radius: 50%;
  background: #fff;
}
.buttons {
  margin-top: 48px;
  display: flex;
  justify-content: flex-end;
}
.cancel {
  padding: 0 35px;
  color: #fff;
}
.save {
  width: 128px;
  height: 72px;
  border-radius: 16px;
  background: #b0763b;
  color: #333;
}
.arrow {
  position: absolute;
  right: 189px;
  top: 438px;
}
.frame {
  position: absolute;
  right: 27px;
  top: 424px;
  width: 143px;
  height: 113px;
  border: 17px solid #ea4025;
}
</style>
